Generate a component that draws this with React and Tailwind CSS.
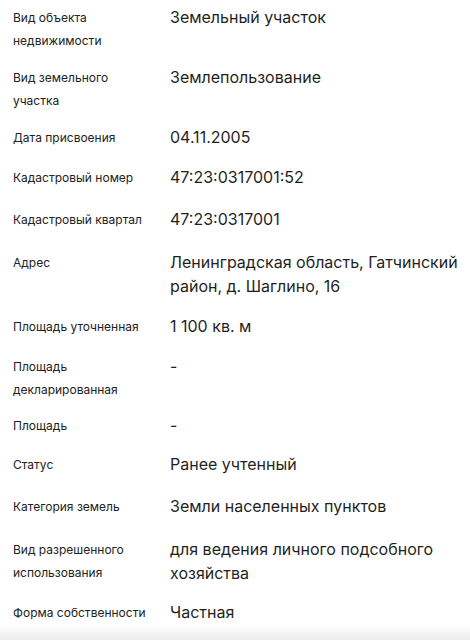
import React from 'react';

// label / value pairs, gap = space below the row
const ROWS = [
  { label: 'Вид объекта недвижимости', value: 'Земельный участок', gap: 'mb-[13px]' },
  { label: 'Вид земельного участка', value: 'Землепользование', gap: 'mb-[13px]' },
  { label: 'Дата присвоения', value: '04.11.2005', gap: 'mb-4' },
  { label: 'Кадастровый номер', value: '47:23:0317001:52', gap: 'mb-[18px]' },
  { label: 'Кадастровый квартал', value: '47:23:0317001', gap: 'mb-[19px]' },
  { label: 'Адрес', value: 'Ленинградская область, Гатчинский район, д. Шаглино, 16', gap: 'mb-4' },
  { label: 'Площадь уточненная', value: '1 100 кв. м', gap: 'mb-4' },
  { label: 'Площадь декларированная', value: '-', gap: 'mb-[12px]' },
  { label: 'Площадь', value: '-', gap: 'mb-[15px]' },
  { label: 'Статус', value: 'Ранее учтенный', gap: 'mb-[18px]' },
  { label: 'Категория земель', value: 'Земли населенных пунктов', gap: 'mb-[19px]' },
  { label: 'Вид разрешенного использования', value: 'для ведения личного подсобного хозяйства', gap: 'mb-[15px]' },
  { label: 'Форма собственности', value: 'Частная', gap: 'mb-0' },
];

function Row({ label, value, gap }) {
  return (
    <div className={`flex items-start ${gap}`}>
      <div className="w-[157px] shrink-0 pr-4 text-[12px] leading-[23px] text-[#222] pt-px">
        {label}
      </div>
      <div className="flex-1 text-[16px] leading-[24px] text-[#1f1f1f]">
        {value}
      </div>
    </div>
  );
}

export default function App() {
  return (
    <div className="w-[470px] h-[640px] bg-white overflow-hidden relative font-['Inter','Liberation_Sans',sans-serif]">
      <div className="pl-[13px] pr-[2px] pt-[5px]">
        {ROWS.map(r => (
          <Row key={r.label} {...r} />
        ))}
      </div>
      {/* bottom fade of the card */}
      <div className="absolute left-0 right-0 bottom-0 h-[16px] bg-gradient-to-b from-white/0 to-[#ececec]" />
    </div>
  );
}
